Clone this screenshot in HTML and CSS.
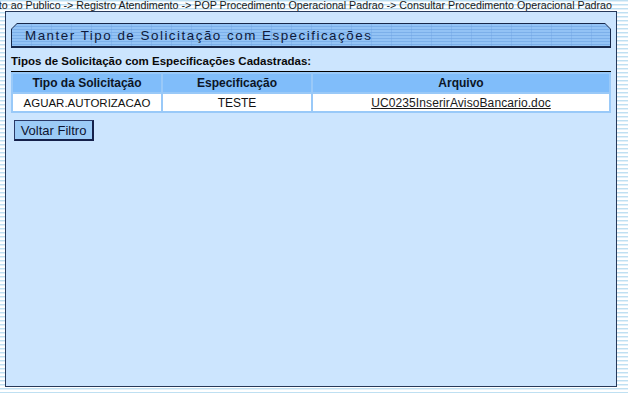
FILE: index.html
```html
<!DOCTYPE html>
<html lang="pt">
<head>
<meta charset="utf-8">
<title>Manter Tipo de Solicitação com Especificações</title>
<link rel="stylesheet" href="styles.css">
</head>
<body>
<div class="crumbs"><span>Gsan -&gt; Atendimento ao Publico -&gt; Registro Atendimento -&gt; POP Procedimento Operacional Padrao -&gt; Consultar Procedimento Operacional Padrao</span></div>
<div class="panel">
  <div class="title"><div class="title-in">Manter Tipo de Solicitação com Especificações</div></div>
  <div class="label">Tipos de Solicitação com Especificações Cadastradas:</div>
  <div class="rule"></div>
  <table class="grid">
    <tr class="head">
      <th class="c1">Tipo da Solicitação</th>
      <th class="c2">Especificação</th>
      <th class="c3">Arquivo</th>
    </tr>
    <tr class="row">
      <td class="tipo">AGUAR.AUTORIZACAO</td>
      <td>TESTE</td>
      <td><a href="#">UC0235InserirAvisoBancario.doc</a></td>
    </tr>
  </table>
  <button class="btn" type="button">Voltar Filtro</button>
</div>
</body>
</html>
```
FILE: styles.css
```css
html, body {
  margin: 0;
  padding: 0;
}
body {
  width: 628px;
  height: 393px;
  overflow: hidden;
  font-family: "Liberation Sans", Arial, sans-serif;
  background: repeating-linear-gradient(to bottom, #bfe0f2 0 1px, #e2f0f9 1px 2px, #ffffff 2px 4px);
}
.crumbs {
  height: 11px;
  display: flex;
  justify-content: flex-end;
  padding-right: 16px;
  overflow: hidden;
  white-space: nowrap;
  font-size: 10.7px;
  line-height: 11px;
  color: #1a1a1a;
}
.crumbs span {
  flex: none;
}
.panel {
  box-sizing: border-box;
  margin-left: 5px;
  width: 612px;
  height: 376px;
  border: 1px solid #26395a;
  background: #cce5fe;
  padding: 11px 5px 0 5px;
}
.title {
  height: 25px;
  box-sizing: border-box;
  padding: 1px 1px 2px 1px;
  background: #17284a;
  clip-path: polygon(6px 0, calc(100% - 6px) 0, 100% 6px, 100% 100%, 0 100%, 0 6px);
}
.title-in {
  height: 100%;
  box-sizing: border-box;
  padding-left: 13px;
  display: flex;
  align-items: center;
  clip-path: polygon(5px 0, calc(100% - 5px) 0, 100% 5px, 100% 100%, 0 100%, 0 5px);
  background:
    repeating-linear-gradient(to right, rgba(120, 170, 230, 0) 0 19px, rgba(110, 160, 225, 0.35) 19px 20px),
    repeating-linear-gradient(to bottom, #93c3f5 0 2px, #7cb0ea 2px 3px);
  font-size: 13.4px;
  letter-spacing: 1.5px;
  color: #0e1a3c;
  white-space: nowrap;
}
.label {
  margin-top: 6px;
  font-size: 11.5px;
  line-height: 14px;
  font-weight: bold;
  color: #0a0a0a;
  white-space: nowrap;
}
.rule {
  margin-top: 3px;
  height: 2px;
  background: #000;
}
.grid {
  margin-top: -1px;
  width: 600px;
  border-collapse: separate;
  border-spacing: 2px;
  background: #99c9f8;
  table-layout: fixed;
}
.grid th, .grid td {
  padding: 0;
  height: 18px;
  text-align: center;
  font-size: 12px;
  white-space: nowrap;
}
.grid th {
  background: #80bdfa;
  font-weight: bold;
  color: #0c1526;
}
.grid td {
  background: #ffffff;
  color: #111;
  height: 17px;
}
.grid td.tipo {
  font-size: 11.5px;
}
.c1, .c2 {
  width: 148px;
}
.grid a {
  color: #1a1a1a;
  text-decoration: underline;
  letter-spacing: 0.1px;
}
.btn {
  margin: 7px 0 0 3px;
  width: 80px;
  height: 21px;
  padding: 0;
  font-family: "Liberation Sans", Arial, sans-serif;
  font-size: 13px;
  color: #0d1430;
  background: #9ccbf6;
  border: 1px solid #2a3a68;
  border-right: 2px solid #14204a;
  border-bottom: 2px solid #14204a;
}
```
